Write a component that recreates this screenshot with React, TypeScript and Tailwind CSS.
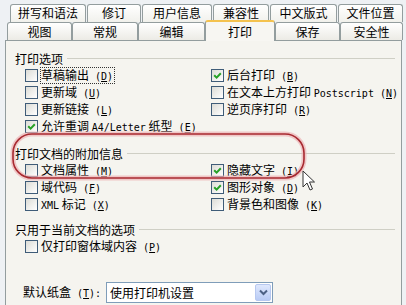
import type { ReactNode } from 'react';

const topTabs = [
  { label: '拼写和语法', w: 'w-[76px]' },
  { label: '修订', w: 'w-[54px]' },
  { label: '用户信息', w: 'w-[70px]' },
  { label: '兼容性', w: 'w-[56px]' },
  { label: '中文版式', w: 'w-[67px]' },
  { label: '文件位置', w: 'w-[65px]' },
];

const bottomTabs = [
  { label: '视图', w: 'w-[65px]' },
  { label: '常规', w: 'w-[66px]' },
  { label: '编辑', w: 'w-[67px]' },
  { label: '打印', w: 'w-[70px]', active: true },
  { label: '保存', w: 'w-[65px]' },
  { label: '安全性', w: 'w-[63px]' },
];

function Latin({ children }: { children: ReactNode }) {
  return <span className="font-['DejaVu_Sans_Mono',monospace] text-[10px]">{children}</span>;
}

// mnemonic like " (D)" with the letter underlined
function Key({ k }: { k: string }) {
  return (
    <Latin>
      {' ('}
      <span className="underline underline-offset-1">{k}</span>
      {')'}
    </Latin>
  );
}

function Cb({ checked, focus, children }: { checked?: boolean; focus?: boolean; children: ReactNode }) {
  return (
    <div className="flex h-[17px] items-center gap-[2px]">
      <span className="flex h-[13px] w-[13px] shrink-0 items-center justify-center border border-[#3f5c78] bg-gradient-to-br from-[#dcdcd6] to-white">
        {checked && (
          <svg width="9" height="9" viewBox="0 0 9 9">
            <path d="M1.2 4.2 L3.6 6.6 L7.8 2.2" fill="none" stroke="#27a127" strokeWidth="2" />
          </svg>
        )}
      </span>
      <span
        className={`whitespace-nowrap leading-none ${
          focus ? 'border border-dotted border-[#333] py-[1px] pr-[1px]' : 'px-[1px]'
        }`}
      >
        {children}
      </span>
    </div>
  );
}

function GroupTitle({ children }: { children: ReactNode }) {
  return (
    <div className="flex h-[17px] items-center">
      <span className="whitespace-nowrap leading-none">{children}</span>
      <div className="ml-[4px] h-px flex-1 bg-[#cfcfc5]" />
    </div>
  );
}

export default function App() {
  return (
    <div className="relative h-[305px] w-[406px] overflow-hidden bg-[#eef1f4] font-['Noto_Sans_CJK_SC',sans-serif] text-[12px] text-black">
      {/* Tabs */}
      <div className="pt-[4px]">
        <div className="flex h-[18px] gap-[1px] pl-[10px]">
          {topTabs.map(t => (
            <div
              key={t.label}
              className={`${t.w} flex items-start justify-center rounded-t-[3px] border border-b-0 border-[#939d9e] bg-gradient-to-b from-white to-[#f1f1ec] pt-[2px] leading-none`}
            >
              {t.label}
            </div>
          ))}
        </div>
        <div className="-mt-[2px] flex h-[20px] items-end pl-[7px]">
          {bottomTabs.map(t =>
            t.active ? (
              <div
                key={t.label}
                className={`${t.w} relative z-10 -mb-[1px] flex h-[21px] items-center justify-center rounded-t-[3px] border border-b-0 border-[#939d9e] border-t-2 border-t-[#f4c24e] bg-[#f7f6f2] leading-none`}
              >
                {t.label}
              </div>
            ) : (
              <div
                key={t.label}
                className={`${t.w} flex h-[18px] items-center justify-center rounded-t-[3px] border border-b-0 border-[#939d9e] bg-gradient-to-b from-white to-[#ecebe5] leading-none`}
              >
                {t.label}
              </div>
            )
          )}
        </div>
      </div>

      {/* Panel */}
      <div className="ml-[5px] h-[280px] w-[397px] border border-[#939d9e] bg-[#f5f4ef] pl-[9px] pr-[6px] pt-[9px]">
        <GroupTitle>打印选项</GroupTitle>
        <div className="grid grid-cols-[186px_1fr] pl-[10px]">
          <Cb focus>
            草稿输出<Key k="D" />
          </Cb>
          <Cb checked>
            后台打印<Key k="B" />
          </Cb>
          <Cb>
            更新域<Key k="U" />
          </Cb>
          <Cb>
            在文本上方打印 <Latin>Postscript</Latin>
            <Key k="N" />
          </Cb>
          <Cb>
            更新链接<Key k="L" />
          </Cb>
          <Cb>
            逆页序打印<Key k="R" />
          </Cb>
          <Cb checked>
            允许重调 <Latin>A4/Letter</Latin> 纸型<Key k="E" />
          </Cb>
          <div />
        </div>

        <div className="mt-[10px]">
          <GroupTitle>打印文档的附加信息</GroupTitle>
        </div>
        <div className="grid grid-cols-[186px_1fr] pl-[10px]">
          <Cb>
            文档属性<Key k="M" />
          </Cb>
          <Cb checked>
            隐藏文字<Key k="I" />
          </Cb>
          <Cb>
            域代码<Key k="F" />
          </Cb>
          <Cb checked>
            图形对象<Key k="D" />
          </Cb>
          <Cb>
            <Latin>XML</Latin> 标记<Key k="X" />
          </Cb>
          <Cb>
            背景色和图像<Key k="K" />
          </Cb>
        </div>

        <div className="mt-[8px]">
          <GroupTitle>只用于当前文档的选项</GroupTitle>
        </div>
        <div className="pl-[10px]">
          <Cb>
            仅打印窗体域内容<Key k="P" />
          </Cb>
        </div>

        {/* Default tray */}
        <div className="mt-[27px] flex items-center pl-[8px]">
          <span className="w-[83px] whitespace-nowrap leading-none">
            默认纸盒
            <Latin>
              {' ('}
              <span className="underline underline-offset-1">T</span>
              {'):'}
            </Latin>
          </span>
          <div className="flex h-[21px] w-[167px] items-center border border-[#7f9db9] bg-white pl-[3px] pr-[1px]">
            <span className="flex-1 leading-none">使用打印机设置</span>
            <span className="flex h-[17px] w-[16px] items-center justify-center rounded-[2px] border border-[#b7c8f0] bg-gradient-to-b from-[#dfe8fd] to-[#b9cbf5]">
              <svg width="9" height="7" viewBox="0 0 9 7">
                <path d="M1 1.5 L4.5 5 L8 1.5" fill="none" stroke="#4d6185" strokeWidth="2" />
              </svg>
            </span>
          </div>
        </div>
      </div>

      {/* Red highlight and mouse pointer drawn over the dialog */}
      <svg className="pointer-events-none absolute left-0 top-0" width="406" height="305">
        <rect x="13" y="134" width="291" height="44" rx="19" fill="none" stroke="#eeb4b6" strokeWidth="5" opacity="0.7" />
        <rect x="13" y="134" width="291" height="44" rx="19" fill="none" stroke="#a82a31" strokeWidth="1.6" />
        <path
          d="M303 171 L303 187 L307 183 L310 190 L312.5 189 L309.5 182 L314.5 182 Z"
          fill="#fff"
          stroke="#333"
          strokeWidth="1"
        />
      </svg>
    </div>
  );
}
